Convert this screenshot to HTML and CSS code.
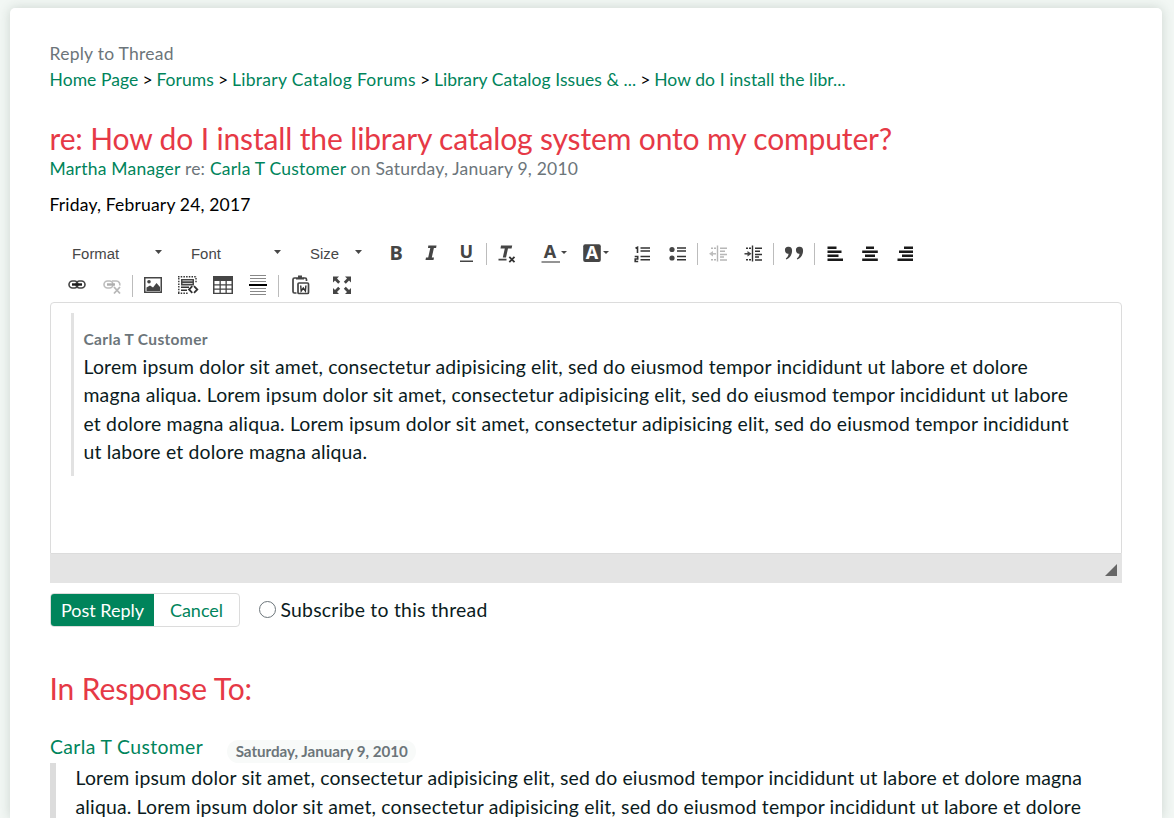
FILE: index.html
```html
<!DOCTYPE html>
<html lang="en">
<head>
<meta charset="utf-8">
<title>Reply to Thread</title>
<link rel="stylesheet" href="styles.css">
</head>
<body>
<main class="card">
  <div class="page-name">Reply to Thread</div>
  <nav class="crumbs"><a>Home Page</a> &gt; <a>Forums</a> &gt; <a class="wide">Library Catalog Forums</a> &gt; <a>Library Catalog Issues &amp; ...</a> &gt; <a>How do I install the libr...</a></nav>
  <h1 class="title">re: How do I install the library catalog system onto my computer?</h1>
  <div class="byline"><a>Martha Manager</a> re: <a>Carla T Customer</a> on Saturday, January 9, 2010</div>
  <div class="date">Friday, February 24, 2017</div>

  <div class="toolbar">
    <div class="row">
      <div class="combo"><span>Format</span><i class="caret"></i></div>
      <div class="combo"><span>Font</span><i class="caret"></i></div>
      <div class="combo combo-size"><span>Size</span><i class="caret"></i></div>
      <svg class="btn" viewBox="379 237 35 32"><text x="389.6" y="260" class="glyph">B</text></svg>
      <svg class="btn" viewBox="414 237 35 32"><path d="M428.3 245.5h8.200l-.4 2.500h-2.200l-2.100 9.500h2.200l-.5 2.500h-8l.5-2.500h2.200l2.100-9.500h-2.300z"/></svg>
      <svg class="btn" viewBox="449 237 35 32"><text x="459.600" y="258" class="glyph glyph-u">U</text><path d="M460 260.500h13v1.500h-13z"/></svg>
      <i class="sep"></i>
      <svg class="btn" viewBox="490 237 35 32"><path d="M501 245.500h11.200l-.6 3h-3.600l-2 9h-3.200l2-9H500.500zM498.500 258.800h8v1.700h-8z"/><path d="M509.300 256.800l5.200 5.400M514.500 256.800l-5.200 5.400" class="line bold"/></svg>
      <svg class="btn btn-color" viewBox="535 237 38 32"><text x="543.800" y="258" class="glyph glyph-a">A</text><path d="M541.500 261h18.500v2h-18.500z" fill="#949494"/><path d="M561 251h6l-3 3z"/></svg>
      <svg class="btn btn-bg" viewBox="573 237 42 32"><rect x="583.200" y="244.300" width="17.600" height="17.600" rx="2"/><text x="585.700" y="259.200" class="glyph glyph-w">A</text><path d="M603 251h6l-3 3z"/></svg>
      <svg class="btn" viewBox="625 237 35 32"><path d="M635.500 248.300l2-1v5.700M634.700 256.500h3v2.500h-2.500v2.500h3" class="line num"/><path d="M640.500 248h9.500M640.500 251h9.500M640.500 256.500h9.500M640.500 259.700h9.500" class="line"/></svg>
      <svg class="btn" viewBox="660 237 35 32"><circle cx="672" cy="249.500" r="2.600"/><circle cx="672" cy="258" r="2.600"/><path d="M677 248h9M677 251h9M677 256.500h9M677 259.700h9" class="line"/></svg>
      <i class="sep"></i>
      <svg class="btn off" viewBox="701 237 35 32"><path d="M717.500 245.500v16M720 248.200h7M720 251.300h5M720 254.500h7M720 257h4M720 260h7" class="line"/><path d="M711 248.200h5M711 259.700h5" class="line" stroke-dasharray="2 1"/><path d="M712 253.800h4" class="line"/><path d="M709 253.800l4-2.700v5.400z"/></svg>
      <svg class="btn" viewBox="736 237 35 32"><path d="M752.500 245.500v16M755 248.200h7M755 251.300h5M755 254.500h7M755 257h4M755 260h7" class="line"/><path d="M746 248.200h5M746 259.700h5" class="line" stroke-dasharray="2 1"/><path d="M744.500 253.800h4" class="line"/><path d="M751.500 253.800l-4-2.700v5.400z"/></svg>
      <i class="sep"></i>
      <svg class="btn" viewBox="777 237 35 32"><path d="M785 250.500a3.500 3.300 0 0 1 7-.8c.4 4-1.500 8-5.600 9.800l-.6-1c1.700-1.400 2.700-3 2.700-4.800-2 .3-3.500-1.200-3.500-3.200z"/><path d="M796 250.500a3.500 3.300 0 0 1 7-.8c.4 4-1.500 8-5.600 9.800l-.6-1c1.700-1.400 2.700-3 2.700-4.800-2 .3-3.500-1.200-3.500-3.200z"/></svg>
      <i class="sep"></i>
      <svg class="btn" viewBox="818 237 35 32"><path d="M827.500 247.700h9M827.500 251.700h14M827.500 255.700h11M827.500 259.700h15.500" class="bar"/></svg>
      <svg class="btn" viewBox="853 237 35 32"><path d="M866 247.700h8M862.200 251.700h15.600M865 255.700h10M862.200 259.700h15.600" class="bar"/></svg>
      <svg class="btn" viewBox="888 237 35 32"><path d="M904 247.700h9M899 251.700h14M902 255.700h11M897.500 259.700h15.500" class="bar"/></svg>
    </div>
    <div class="row">
      <svg class="btn" viewBox="60 269 35 32"><g class="link"><rect x="69" y="281" width="9" height="7" rx="3.500"/><rect x="76" y="281" width="9" height="7" rx="3.500"/></g><path d="M72 284.500h10" class="bar"/></svg>
      <svg class="btn off" viewBox="95 269 35 32"><g class="link"><rect x="104" y="281" width="9" height="7" rx="3.500"/><path d="M112 281h4.500a3.500 3.500 0 0 1 3.200 4.500"/></g><path d="M107 284.500h8" class="bar"/><path d="M114 287l6 6.500M120 287l-6 6.500" class="line bold"/></svg>
      <i class="sep"></i>
      <svg class="btn" viewBox="136 269 35 32"><path fill-rule="evenodd" d="M144 277h18v16h-18zM145.500 278.500v13h15v-13z"/><circle cx="149" cy="281.700" r="1.800"/><path d="M146.500 291v-3.500l3.500-2 3 2 3.500-4.500 3.500 4v4z"/></svg>
      <svg class="btn" viewBox="171 269 35 32"><path d="M178 276.700h19M178.800 278v15M178 293.200h10" class="line" stroke-dasharray="1.500 1.200"/><path d="M196 278v5" class="line" stroke-dasharray="1.500 1.200"/><path fill-rule="evenodd" d="M181 279h13v6.500h-13zM182.500 280.500v.8h10v-.8zM182.500 283v.8h10v-.8z"/><path d="M181 287.200h8M181 290.200h6" class="line"/><path d="M192.300 286.200l-3.300 3.300 3.300 3.300M194 286.200l3.300 3.300-3.300 3.300" class="line bold"/></svg>
      <svg class="btn" viewBox="206 269 35 32"><path fill-rule="evenodd" d="M213 276h20v18h-20zM214.500 281v3.200h5V281zM220.800 281v3.200h4.700V281zM226.800 281v3.200h4.700V281zM214.500 285.500v3h5v-3zM220.800 285.500v3h4.700v-3zM226.800 285.500v3h4.700v-3zM214.500 289.700v3h5v-3zM220.800 289.700v3h4.700v-3zM226.800 289.700v3h4.700v-3z"/></svg>
      <svg class="btn" viewBox="241 269 35 32"><path d="M250 275.500h16M250 278.500h16M250 281.500h16M250 288.500h16M250 291.500h16M250 294.500h16" class="rule"/><path d="M249 284h18v2h-18z" fill="#000"/></svg>
      <i class="sep"></i>
      <svg class="btn" viewBox="282 269 35 32"><path d="M296 278h-1.500a1.500 1.500 0 0 0-1.500 1.500v12a1.500 1.500 0 0 0 1.500 1.500h2M303.500 278h1.500a1.500 1.500 0 0 1 1.500 1.500v1.500" class="clip"/><path d="M296 279.500v-2.200h2v-1.800h4v1.800h2v2.200z"/><rect x="298" y="283" width="10.500" height="10.500" rx="1" class="clip"/><path d="M300.700 285.500l.5 5.500 2.100-3 2.100 3 .5-5.500" class="line"/></svg>
      <svg class="btn btn-max" viewBox="325 269 35 32"><path d="M333 276.500h6l-2 2 3.200 3.200-2 2-3.200-3.200-2 2zM351 276.500v6l-2-2-3.200 3.200-2-2 3.200-3.200-2-2zM333 294v-6l2 2 3.200-3.200 2 2-3.200 3.200 2 2zM351 294h-6l2-2-3.200-3.200 2-2 3.200 3.200 2-2z"/></svg>
    </div>
  </div>

  <section class="editor">
    <div class="canvas">
      <blockquote class="quoted">
        <div class="quoted-name">Carla T Customer</div>
        Lorem ipsum dolor sit amet, consectetur adipisicing elit, sed do eiusmod tempor incididunt ut labore et dolore<br>magna aliqua. Lorem ipsum dolor sit amet, consectetur adipisicing elit, sed do eiusmod tempor incididunt ut labore<br>et dolore magna aliqua. Lorem ipsum dolor sit amet, consectetur adipisicing elit, sed do eiusmod tempor incididunt<br>ut labore et dolore magna aliqua.
      </blockquote>
    </div>
    <div class="editor-foot"><i class="grip"></i></div>
  </section>

  <div class="actions">
    <div class="group"><a class="post">Post Reply</a><a class="cancel">Cancel</a></div>
    <span class="radio"></span><span class="subscribe">Subscribe to this thread</span>
  </div>

  <h2 class="response-title">In Response To:</h2>
  <div class="response-head"><a>Carla T Customer</a><span class="badge">Saturday, January 9, 2010</span></div>
  <blockquote class="response">Lorem ipsum dolor sit amet, consectetur adipisicing elit, sed do eiusmod tempor incididunt ut labore et dolore magna<br>aliqua. Lorem ipsum dolor sit amet, consectetur adipisicing elit, sed do eiusmod tempor incididunt ut labore et dolore</blockquote>
</main>
</body>
</html>
```
FILE: styles.css
```css
* { box-sizing: border-box; }
html, body { height: 100%; }
body {
  margin: 0;
  padding: 8px 12px 0 10px;
  overflow: hidden;
  background: #f2f7f4;
  color: #0b1b21;
  font: 19.400px/28.400px Lato, "Liberation Sans", sans-serif;
  letter-spacing: .175px;
  white-space: nowrap;
}
a { color: #00845b; }
.card {
  display: flex;
  flex-direction: column;
  height: 100%;
  padding: 32px 40px 0;
  background: #fff;
  border-radius: 5px 5px 0 0;
  box-shadow: 0 0 12px rgba(40, 60, 50, .18);
}
.card > * { flex: none; }
.page-name, .crumbs, .title, .byline, .date, .response-title { text-indent: -.5px; }
.page-name { font-size: 17.500px; letter-spacing: .26px; line-height: 26px; height: 26px; padding-top: 1px; color: #6c757a; }
.crumbs { font-size: 17.500px; letter-spacing: -.38px; line-height: 26px; height: 26px; padding-top: 1px; color: #000; }
.crumbs a { letter-spacing: .07px; }
.crumbs .wide { letter-spacing: .3px; }
.title { margin: 28px 0 0; font-size: 30px; letter-spacing: -.14px; line-height: 37px; font-weight: 400; color: #e63946; }
.byline { margin-top: -1px; font-size: 17.500px; letter-spacing: .22px; line-height: 26px; color: #6c757a; }
.date { margin-top: 10px; font-size: 17.500px; letter-spacing: .18px; line-height: 26px; color: #000; }

.toolbar { height: 84px; padding: 19px 0 0 10px; }
.row { display: flex; height: 32px; }
.combo {
  display: flex;
  align-items: center;
  justify-content: space-between;
  width: 90px;
  height: 32px;
  margin: 0 17px 0 12px;
  padding-top: 1px;
  font: 14.900px/32px "Liberation Sans", sans-serif;
  letter-spacing: 0;
  color: #474747;
}
.combo span { margin-top: 1px; }
.combo-size { width: 52px; }
.caret { width: 7px; height: 4px; margin: -3px 0 0 0; background: #484848; clip-path: polygon(0 0, 100% 0, 50% 100%); }
.btn { flex: none; width: 35px; height: 32px; fill: #454545; }
.btn-color { width: 38px; margin-left: 10px; }
.btn-bg { width: 42px; margin-right: 10px; }
.btn-max { margin-left: 8px; }
.off { opacity: .35; }
.sep { flex: none; width: 6px; padding: 6px 3px 4px 2px; }
.sep::before { content: ""; display: block; width: 1px; height: 22px; background: #bcbcbc; }
.glyph { font: 700 20px "Noto Sans", sans-serif; letter-spacing: 0; }
.glyph-u { font-size: 18px; }
.glyph-a { font-size: 18px; }
.glyph-w { font-size: 18px; fill: #fff; }
.line { fill: none; stroke: #333; stroke-width: 1.400; }
.num { stroke-width: 1.600; }
.bold { stroke-width: 1.800; }
.bar { fill: none; stroke: #1a1a1a; stroke-width: 2.400; }
.link { fill: none; stroke: #444; stroke-width: 1.600; }
.rule { stroke: #888; stroke-width: 1; }
.clip { fill: none; stroke: #444; stroke-width: 1.700; }

.editor { height: 281px; }
.canvas {
  height: 252px;
  padding: 10px 20px;
  border: 1px solid #dcdcdc;
  border-radius: 4px 4px 0 0;
}
.quoted { height: 163px; margin: 0; padding: 12px 0 0 9.500px; border-left: 3px solid #e2e2e2; }
.quoted-name { font-size: 15.500px; letter-spacing: .35px; font-weight: 700; line-height: 28px; color: #6c757a; }
.editor-foot { display: flex; justify-content: flex-end; height: 29px; padding: 10px 5px 0 0; background: #e4e4e4; }
.grip { width: 12px; height: 12px; background: #666; clip-path: polygon(100% 0, 100% 100%, 0 100%); }

.actions { display: flex; align-items: center; height: 34px; margin-top: 10px; }
.group { display: flex; width: 190px; height: 34px; border: 1px solid #dcdcdc; border-radius: 4px; overflow: hidden; font-size: 18px; letter-spacing: 0; line-height: 33px; text-align: center; }
.post { width: 103px; background: #00845b; color: #fff; }
.cancel { flex: 1; }
.radio { width: 17px; height: 17px; margin: -1px 4.500px 0 19px; border: 1.500px solid #6c757a; border-radius: 50%; }
.subscribe { letter-spacing: .24px; }
.response-title { margin: 43px 0 0; font-size: 30px; letter-spacing: -.1px; line-height: 37px; font-weight: 400; color: #e63946; }
.response-head { display: flex; align-items: flex-start; height: 30px; margin-top: 26px; letter-spacing: .37px; }
.badge { height: 23px; margin: 7px 0 0 24px; padding: 0 8px 0 8.500px; border-radius: 12px; background: #f8faf9; color: #6c757a; font-size: 15.200px; letter-spacing: -.03px; font-weight: 700; line-height: 23px; }
.card > .response { flex: 1; min-height: 0; margin: 0; padding-left: 19.500px; overflow: hidden; border-left: 6px solid #dcdcdc; line-height: 29px; }
```
